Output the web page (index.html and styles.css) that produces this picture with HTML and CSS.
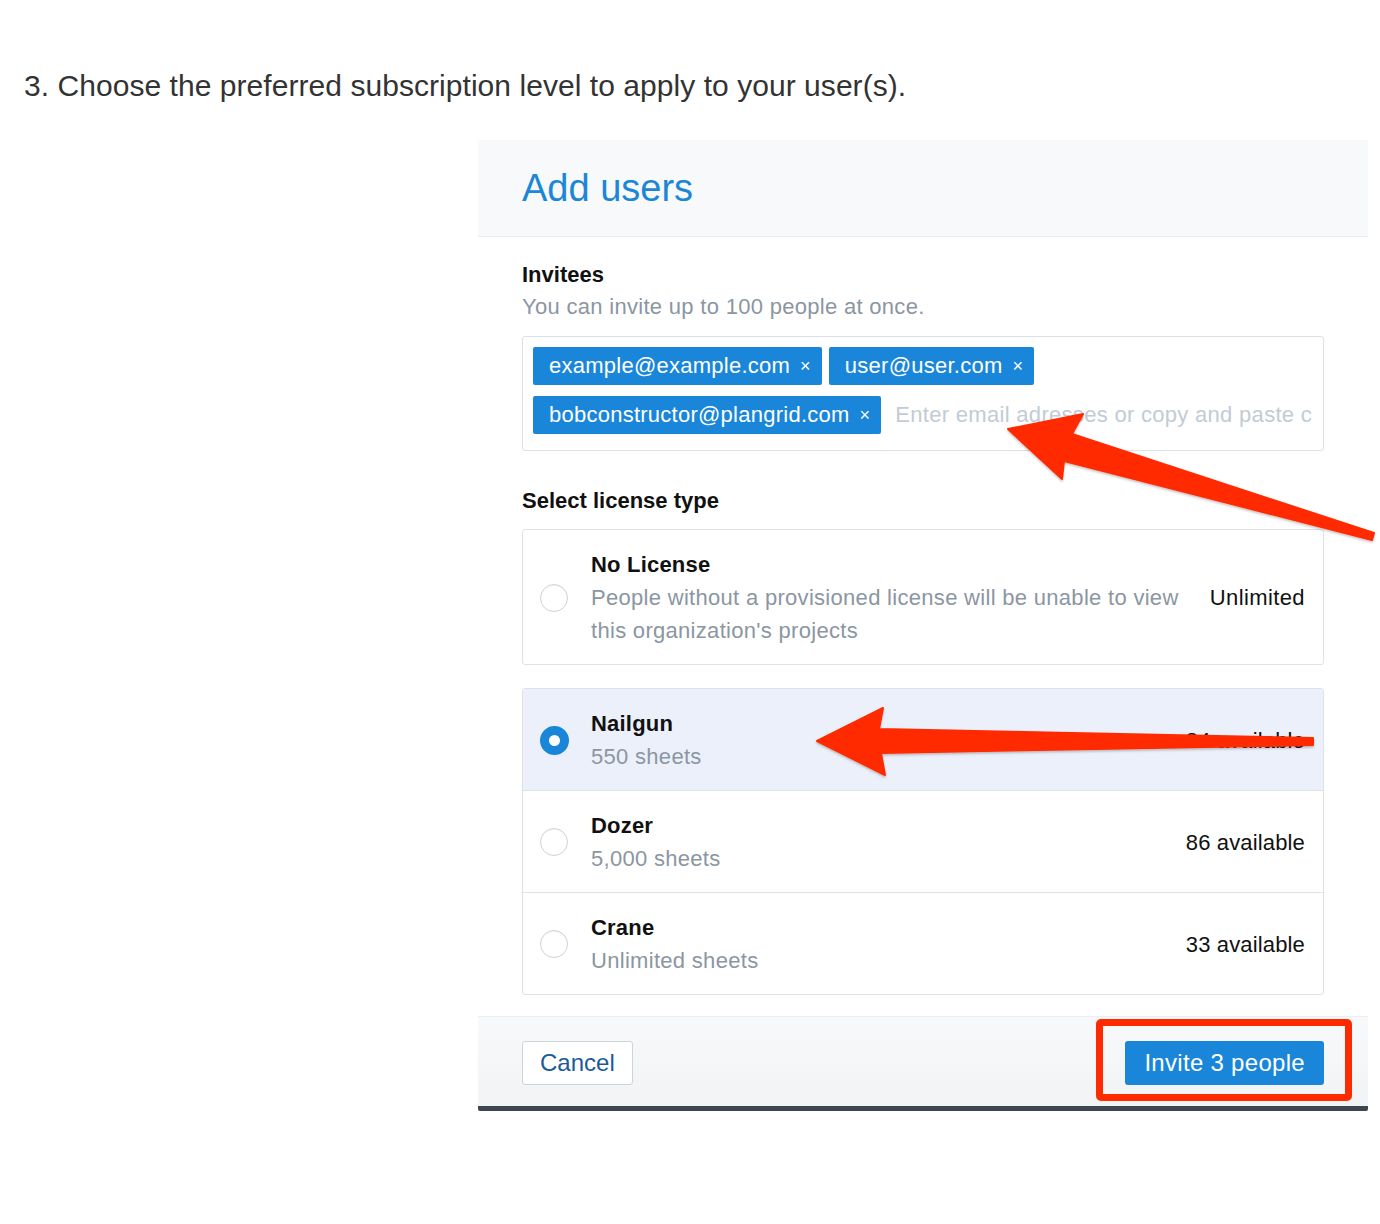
FILE: index.html
```html
<!DOCTYPE html>
<html lang="en">
<head>
<meta charset="utf-8">
<title>Add users</title>
<link rel="stylesheet" href="styles.css">
</head>
<body>
<p class="step">3. Choose the preferred subscription level to apply to your user(s).</p>

<div class="dialog">
  <div class="dlg-head"><h2 class="dlg-title">Add users</h2></div>
  <div class="dlg-body">
    <div class="label">Invitees</div>
    <div class="hint">You can invite up to 100 people at once.</div>
    <div class="tagbox">
      <span class="tag">example@example.com<span class="tag-x">×</span></span>
      <span class="tag">user@user.com<span class="tag-x">×</span></span>
      <span class="break"></span>
      <span class="tag">bobconstructor@plangrid.com<span class="tag-x">×</span></span>
      <span class="placeholder">Enter email adresses or copy and paste c</span>
    </div>

    <div class="label label-license">Select license type</div>

    <div class="lic-group">
      <div class="lic-row lic-tall">
        <span class="radio"></span>
        <div class="lic-text">
          <div class="lic-name">No License</div>
          <div class="lic-desc">People without a provisioned license will be unable to view this organization's projects</div>
        </div>
        <div class="lic-count">Unlimited</div>
      </div>
    </div>

    <div class="lic-group lic-group-second">
      <div class="lic-row selected">
        <span class="radio checked"></span>
        <div class="lic-text">
          <div class="lic-name">Nailgun</div>
          <div class="lic-desc">550 sheets</div>
        </div>
        <div class="lic-count">84 available</div>
      </div>
      <div class="lic-row">
        <span class="radio"></span>
        <div class="lic-text">
          <div class="lic-name">Dozer</div>
          <div class="lic-desc">5,000 sheets</div>
        </div>
        <div class="lic-count">86 available</div>
      </div>
      <div class="lic-row">
        <span class="radio"></span>
        <div class="lic-text">
          <div class="lic-name">Crane</div>
          <div class="lic-desc">Unlimited sheets</div>
        </div>
        <div class="lic-count">33 available</div>
      </div>
    </div>
  </div>
  <div class="dlg-foot">
    <button class="btn btn-cancel">Cancel</button>
    <button class="btn btn-primary">Invite 3 people</button>
    <span class="highlight"></span>
  </div>
</div>

<svg class="arrows" width="1380" height="1224" viewBox="0 0 1380 1224">
  <defs>
    <filter id="sh" x="-10%" y="-10%" width="120%" height="130%">
      <feDropShadow dx="0" dy="1.5" stdDeviation="1.2" flood-color="#000" flood-opacity="0.25"/>
    </filter>
  </defs>
  <polygon filter="url(#sh)" fill="#ff2a00" stroke="#ff2a00" stroke-width="2" stroke-linejoin="round"
    points="1008,429 1083,414 1072,434 1374,533 1372,540 1064,461 1062,479"/>
  <polygon filter="url(#sh)" fill="#ff2a00" stroke="#ff2a00" stroke-width="2" stroke-linejoin="round"
    points="817,741 883,708 879,729 1313,738 1313,745 881,753 885,775"/>
</svg>
</body>
</html>
```

FILE: styles.css
```css
html, body {
  margin: 0;
  padding: 0;
  background: #ffffff;
}

body {
  position: relative;
  font-family: "Liberation Sans", Arial, Helvetica, sans-serif;
  color: #111;
  width: 1380px;
  min-height: 1224px;
}

.step {
  margin: 0;
  padding: 68px 0 0 24px;
  font-size: 30px;
  line-height: 36px;
  color: #333;
  letter-spacing: 0.05px;
}

.dialog {
  margin: 36px 0 0 478px;
  width: 890px;
  background: #fff;
  border-bottom: 5px solid #3e4651;
  border-radius: 3px 3px 2px 2px;
}

.dlg-head {
  height: 96px;
  display: flex;
  align-items: center;
  padding-left: 44px;
  background: #f8f9fa;
  border-bottom: 1px solid #e9ecef;
}

.dlg-title {
  margin: 0;
  font-weight: normal;
  font-size: 38px;
  color: #1b87d6;
}

.dlg-body {
  padding: 21px 44px 21px;
  font-size: 22px;
}

.label {
  font-weight: bold;
  font-size: 22px;
  line-height: 33px;
  color: #111;
}

.hint {
  font-size: 22px;
  letter-spacing: 0.3px;
  line-height: 31px;
  color: #8b96a2;
}

.tagbox {
  margin-top: 14px;
  border: 1px solid #dce1e7;
  border-radius: 3px;
  padding: 10px 10px 5px 10px;
  display: flex;
  flex-wrap: wrap;
  align-items: flex-start;
}

.break {
  flex-basis: 100%;
  height: 0;
}

.tag {
  display: inline-flex;
  align-items: center;
  height: 38px;
  padding: 0 11px 0 16px;
  margin: 0 7px 11px 0;
  background: #1a86d9;
  color: #fff;
  font-size: 22px;
  letter-spacing: 0.25px;
  border-radius: 2px;
  white-space: nowrap;
}

.tag-x {
  margin-left: 10px;
  font-size: 18px;
}

.placeholder {
  flex: 1;
  min-width: 0;
  height: 38px;
  line-height: 38px;
  margin-left: 7px;
  font-size: 22px;
  letter-spacing: 0.3px;
  color: #c3cbd4;
  white-space: nowrap;
  overflow: hidden;
}

.label-license {
  margin-top: 33px;
}

.lic-group {
  margin-top: 12px;
  border: 1px solid #dde2e8;
  border-radius: 3px;
  overflow: hidden;
}

.lic-group-second {
  margin-top: 23px;
}

.lic-row {
  display: flex;
  align-items: center;
  padding: 18px 18px 17px 17px;
  border-top: 1px solid #dde2e8;
}

.lic-row:first-child {
  border-top: none;
}

.lic-row.selected {
  background: #ebf0fa;
}

.radio {
  flex: none;
  width: 26px;
  height: 26px;
  border: 1.5px solid #ccd3db;
  border-radius: 50%;
  background: #fff;
  box-shadow: inset 0 1px 1px rgba(0,0,0,0.05);
  margin-right: 23px;
}

.radio.checked {
  width: 11px;
  height: 11px;
  border: 9px solid #1a86d9;
  box-shadow: none;
  margin-right: 22px;
}

.lic-text {
  flex: 1;
  min-width: 0;
}

.lic-name {
  font-weight: bold;
  font-size: 22px;
  letter-spacing: 0.2px;
  line-height: 33px;
  color: #111;
}

.lic-desc {
  font-size: 22px;
  letter-spacing: 0.3px;
  line-height: 33px;
  color: #8b96a2;
}

.lic-tall .lic-desc {
  padding-right: 22px;
}

.lic-count {
  flex: none;
  font-size: 22px;
  letter-spacing: 0.15px;
  line-height: 33px;
  color: #111;
  text-align: right;
}

.lic-tall .lic-count {
  letter-spacing: 0.4px;
}

.dlg-foot {
  position: relative;
  display: flex;
  justify-content: space-between;
  align-items: center;
  padding: 24px 44px 21px;
  background: linear-gradient(#f8f9fa, #f1f3f5);
  border-top: 1px solid #eceef1;
}

.btn {
  font-family: "Liberation Sans", Arial, Helvetica, sans-serif;
  font-size: 24px;
  height: 44px;
  border-radius: 3px;
  padding: 0 17px;
  cursor: pointer;
}

.btn-cancel {
  background: #fff;
  border: 1.5px solid #ccd4dc;
  color: #1d5a98;
}

.btn-primary {
  background: #1a86d9;
  border: none;
  color: #fff;
  padding: 0 19px;
  letter-spacing: 0.3px;
}

.highlight {
  position: absolute;
  left: 618px;
  top: 2px;
  width: 242px;
  height: 68px;
  border: 7px solid #ff2a00;
  border-radius: 5px;
  pointer-events: none;
}

.arrows {
  position: absolute;
  left: 0;
  top: 0;
  pointer-events: none;
}
```
